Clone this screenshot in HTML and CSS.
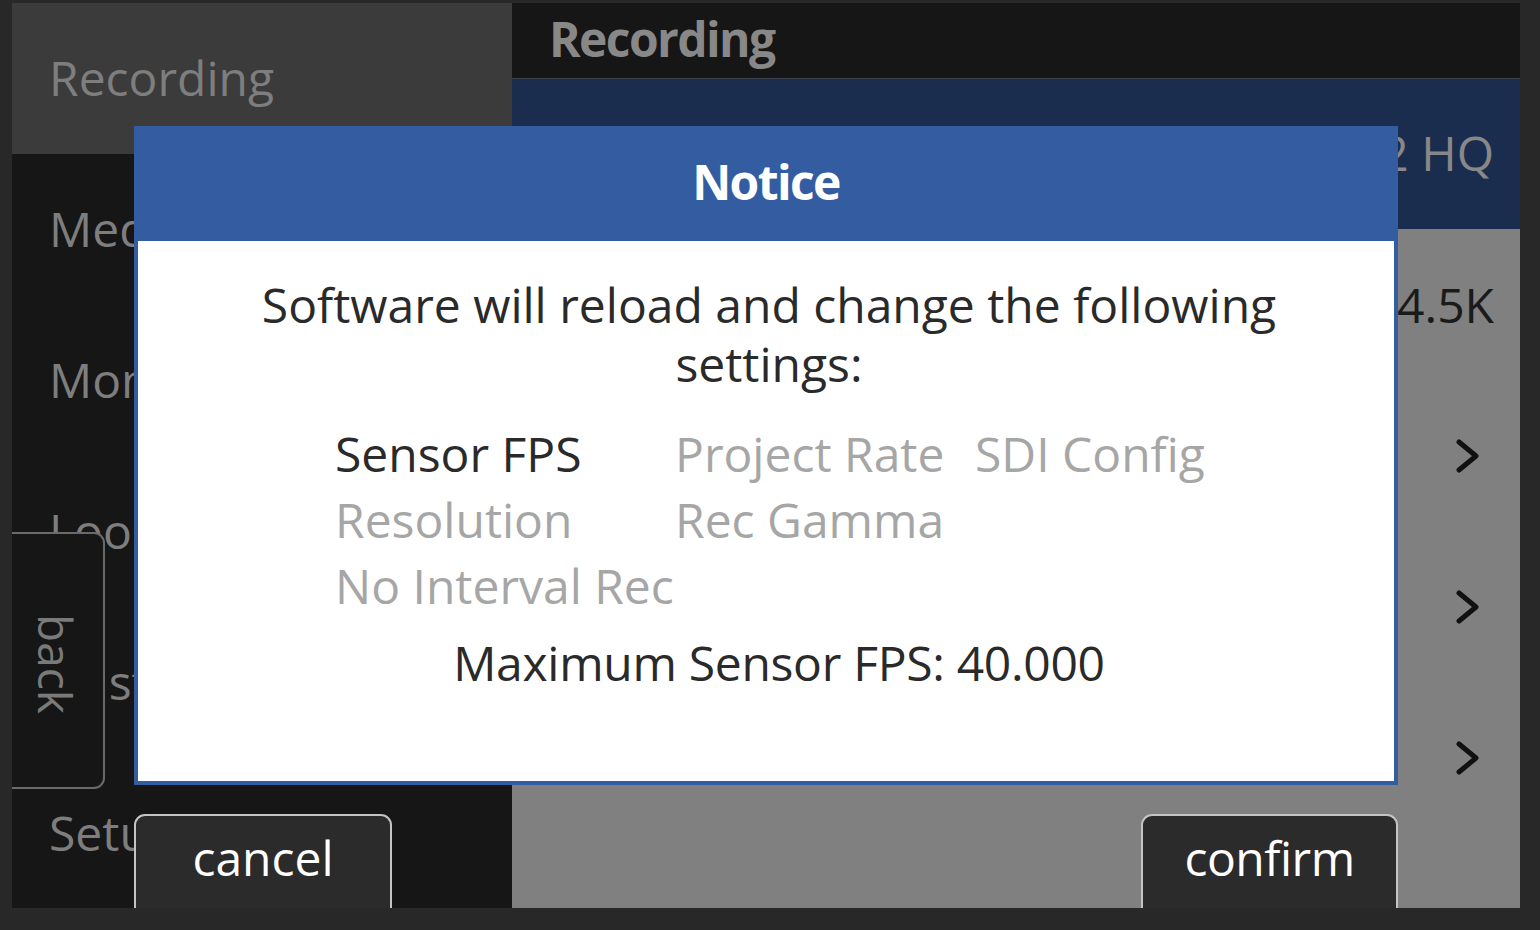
FILE: index.html
```html
<!DOCTYPE html>
<html lang="en">
<head>
<meta charset="utf-8">
<title>Recording - Notice</title>
<link rel="stylesheet" href="styles.css">
</head>
<body>
<div class="screen">
  <nav class="menu">
    <div class="menu-item active">Recording</div>
    <div class="menu-item">Media</div>
    <div class="menu-item">Monitoring</div>
    <div class="menu-item">Looks</div>
    <div class="menu-item">Custom</div>
    <div class="menu-item">Setup</div>
  </nav>
  <section class="panel">
    <header class="panel-title">Recording</header>
    <div class="row selected"><span class="label">Codec</span><span class="value">ProRes 422 HQ</span></div>
    <div class="row"><span class="label">Resolution</span><span class="value dark">4.5K</span></div>
    <div class="row"><span class="label">Frame Rate</span><svg class="chev" viewBox="0 0 24 34"><polyline points="3,3 20,17 3,31"/></svg></div>
    <div class="row"><span class="label">Shutter</span><svg class="chev" viewBox="0 0 24 34"><polyline points="3,3 20,17 3,31"/></svg></div>
    <div class="row"><span class="label">Interval Rec</span><svg class="chev" viewBox="0 0 24 34"><polyline points="3,3 20,17 3,31"/></svg></div>
    <div class="row"></div>
  </section>

  <div class="back"><span>back</span></div>

  <div class="dialog">
    <div class="dialog-head">Notice</div>
    <div class="dialog-body">
      <p class="msg">Software will reload and change the following settings:</p>
      <div class="changes">
        <span class="on">Sensor FPS</span>
        <span>Project Rate</span>
        <span>SDI Config</span>
        <span>Resolution</span>
        <span>Rec Gamma</span>
        <span></span>
        <span>No Interval Rec</span>
      </div>
      <p class="max">Maximum Sensor FPS: 40.000</p>
    </div>
  </div>

  <button class="btn cancel">cancel</button>
  <button class="btn confirm">confirm</button>
</div>
</body>
</html>
```

FILE: styles.css
```css
* { box-sizing: border-box; }

html, body {
  margin: 0;
  padding: 0;
  background: #282828;
  width: 1540px;
  height: 930px;
  overflow: hidden;
  font-family: "Open Sans", "Noto Sans", sans-serif;
}

.screen {
  position: relative;
  margin: 3px 0 0 12px;
  width: 1508px;
  height: 905px;
  display: flex;
  overflow: hidden;
  background: #161616;
}

/* left menu */
.menu {
  width: 500px;
  flex: none;
  display: flex;
  flex-direction: column;
  background: #161616;
}
.menu-item {
  height: 151px;
  flex: none;
  display: flex;
  align-items: center;
  padding-left: 37px;
  padding-bottom: 2px;
  font-size: 48px;
  color: #7e7e7e;
  white-space: nowrap;
}
.menu-item.active { background: #3b3b3b; }

/* right panel */
.panel {
  flex: 1;
  display: flex;
  flex-direction: column;
  background: #808080;
}
.panel-title {
  height: 76px;
  flex: none;
  display: flex;
  align-items: center;
  padding: 0 0 5px 37px;
  background: #161616;
  border-bottom: 1px solid #3a414d;
  font-size: 48px;
  font-weight: 700;
  letter-spacing: -1.6px;
  color: #888;
}
.row {
  height: 151px;
  flex: none;
  display: flex;
  align-items: center;
  justify-content: space-between;
  padding: 0 26px 0 38px;
  font-size: 48px;
  color: #1a1a1a;
}
.row.selected {
  height: 150px;
  background: #1b2d4f;
  color: #888;
  padding-bottom: 3px;
}
.row .value.dark { color: #1a1a1a; }
.chev {
  width: 24px;
  height: 34px;
  margin-right: 14px;
  fill: none;
  stroke: #111;
  stroke-width: 5;
  stroke-linecap: round;
  stroke-linejoin: round;
}

/* back tab */
.back {
  position: absolute;
  left: 0;
  top: 529px;
  width: 93px;
  height: 257px;
  background: #161616;
  border: 2px solid #6a6a6a;
  border-left: none;
  border-radius: 0 11px 11px 0;
  display: flex;
  align-items: center;
  justify-content: center;
}
.back span {
  writing-mode: vertical-rl;
  font-size: 46px;
  color: #7a7a7a;
  line-height: 1;
  margin-left: -4px;
  margin-top: 6px;
}

/* dialog */
.dialog {
  position: absolute;
  left: 122px;
  top: 123px;
  width: 1264px;
  display: flex;
  flex-direction: column;
}
.dialog-head {
  height: 115px;
  background: #335da0;
  color: #fff;
  font-size: 48px;
  font-weight: 700;
  letter-spacing: -1.6px;
  display: flex;
  align-items: center;
  justify-content: center;
  padding-bottom: 5px;
}
.dialog-body {
  height: 544px;
  background: #fff;
  border: 4px solid #335da0;
  border-top: none;
  padding-top: 34px;
  text-align: center;
  color: #2a2a2a;
  font-size: 48px;
}
.msg {
  margin: 0 auto;
  width: 1060px;
  line-height: 59px;
  padding-left: 6px;
}
.changes {
  margin-top: 28px;
  display: grid;
  grid-template-columns: 340px 300px 230px;
  justify-content: center;
  line-height: 66px;
  text-align: left;
  color: #a6a6a6;
  white-space: nowrap;
  padding-left: 8px;
}
.changes .on { color: #2a2a2a; }
.max {
  margin: 11px 0 0;
  line-height: 66px;
  color: #2a2a2a;
  letter-spacing: -0.3px;
  padding-left: 26px;
}

/* buttons */
.btn {
  position: absolute;
  top: 811px;
  height: 120px;
  margin: 0;
  padding: 9px 0 0;
  display: flex;
  justify-content: center;
  align-items: flex-start;
  background: #2b2b2b;
  border: 2px solid #c4c4c4;
  border-radius: 11px 11px 0 0;
  color: #fff;
  font-family: "Open Sans", "Noto Sans", sans-serif;
  font-size: 48px;
  line-height: 65px;
}
.cancel { left: 122px; width: 258px; }
.confirm { left: 1129px; width: 257px; letter-spacing: -0.5px; }
```
